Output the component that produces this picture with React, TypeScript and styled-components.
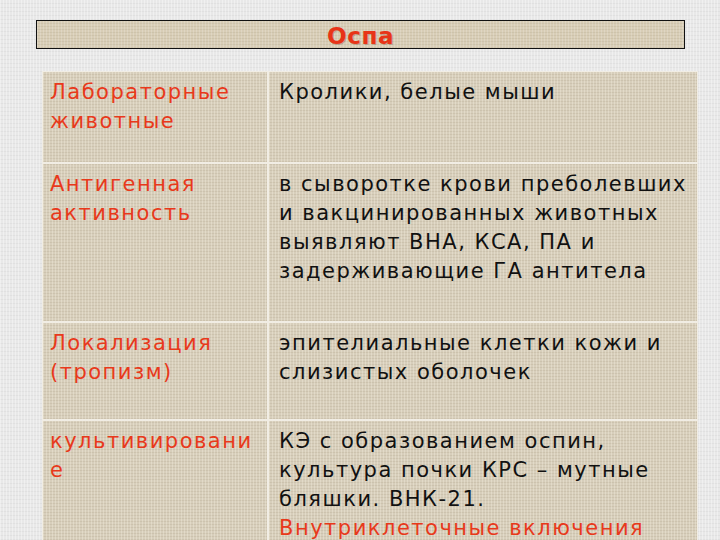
import React from "react";
import styled, { createGlobalStyle } from "styled-components";

const GlobalStyle = createGlobalStyle`
  html, body {
    margin: 0;
    padding: 0;
    height: 540px;
    overflow: hidden;
  }
`;

const Slide = styled.div`
  width: 720px;
  height: 540px;
  overflow: hidden;
  box-sizing: border-box;
  padding: 20px 0 0 36px;
  display: flex;
  flex-direction: column;
  align-items: flex-start;
  gap: 22px;
  font-family: "DejaVu Sans", Verdana, sans-serif;
  background-color: #e8e8e8;
  background-image:
    repeating-linear-gradient(90deg, rgba(255, 255, 255, 0.35) 0 1px, transparent 1px 3px),
    repeating-linear-gradient(0deg, rgba(200, 200, 200, 0.25) 0 1px, transparent 1px 4px);
`;

const TitleBar = styled.div`
  flex: none;
  width: 649px;
  height: 29px;
  box-sizing: border-box;
  padding-top: 3px;
  border: 1px solid #111;
  display: flex;
  align-items: center;
  justify-content: center;
  overflow: hidden;
  background-color: #d8cdb6;
  background-image:
    repeating-linear-gradient(90deg, rgba(255, 255, 255, 0.18) 0 1px, transparent 1px 3px),
    repeating-linear-gradient(0deg, rgba(160, 150, 120, 0.18) 0 1px, transparent 1px 3px);
`;

const Title = styled.span`
  font-family: Tahoma, "DejaVu Sans", sans-serif;
  font-weight: bold;
  font-size: 23px;
  letter-spacing: 0.6px;
  line-height: 1;
  color: #e83418;
  text-shadow: 1px 1px 0 rgba(120, 60, 40, 0.3);
`;

const Table = styled.div`
  flex: none;
  margin-left: 6px;
  display: grid;
  grid-template-columns: 224px 428px;
  gap: 2px;
  padding: 1px;
  background: #f1ede4;
`;

const Cell = styled.div<{ $wide?: boolean }>`
  box-sizing: border-box;
  padding: ${p => (p.$wide ? "6px 0 0 10px" : "6px 0 0 7px")};
  font-size: 21px;
  letter-spacing: 1.5px;
  color: #111;
  background-color: #d7cebb;
  background-image:
    repeating-linear-gradient(90deg, rgba(255, 250, 235, 0.28) 0 1px, transparent 1px 3px),
    repeating-linear-gradient(0deg, rgba(150, 135, 105, 0.16) 0 1px, transparent 1px 3px);
`;

const Label = styled.div`
  color: #e8391b;
`;

const Line = styled.div`
  line-height: 29px;
  white-space: nowrap;
`;

const Accent = styled.span`
  color: #e8391b;
`;

const rows = [
  {
    label: ["Лабораторные", "животные"],
    value: [<>Кролики, белые мыши</>],
    height: 90,
  },
  {
    label: ["Антигенная", "активность"],
    value: [
      <>в сыворотке крови преболевших</>,
      <>и вакцинированных животных</>,
      <>выявляют ВНА, КСА, ПА и</>,
      <>задерживающие ГА антитела</>,
    ],
    height: 157,
  },
  {
    label: ["Локализация", "(тропизм)"],
    value: [<>эпителиальные клетки кожи и</>, <>слизистых оболочек</>],
    height: 96,
  },
  {
    label: ["культивировани", "е"],
    value: [
      <>КЭ с образованием оспин,</>,
      <>культура почки КРС – мутные</>,
      <>бляшки. ВНК-21.</>,
      <Accent>Внутриклеточные включения</Accent>,
    ],
    height: 140,
  },
];

const App = () => {
  return (
    <>
      <GlobalStyle />
      <Slide>
        <TitleBar>
          <Title>Оспа</Title>
        </TitleBar>

        <Table>
          {rows.map((row, i) => (
            <React.Fragment key={i}>
              <Cell style={{ height: row.height }}>
                <Label>
                  {row.label.map((line, j) => (
                    <Line key={j}>{line}</Line>
                  ))}
                </Label>
              </Cell>
              <Cell style={{ height: row.height }} $wide>
                {row.value.map((line, j) => (
                  <Line key={j}>{line}</Line>
                ))}
              </Cell>
            </React.Fragment>
          ))}
        </Table>
      </Slide>
    </>
  );
};

export default App;
